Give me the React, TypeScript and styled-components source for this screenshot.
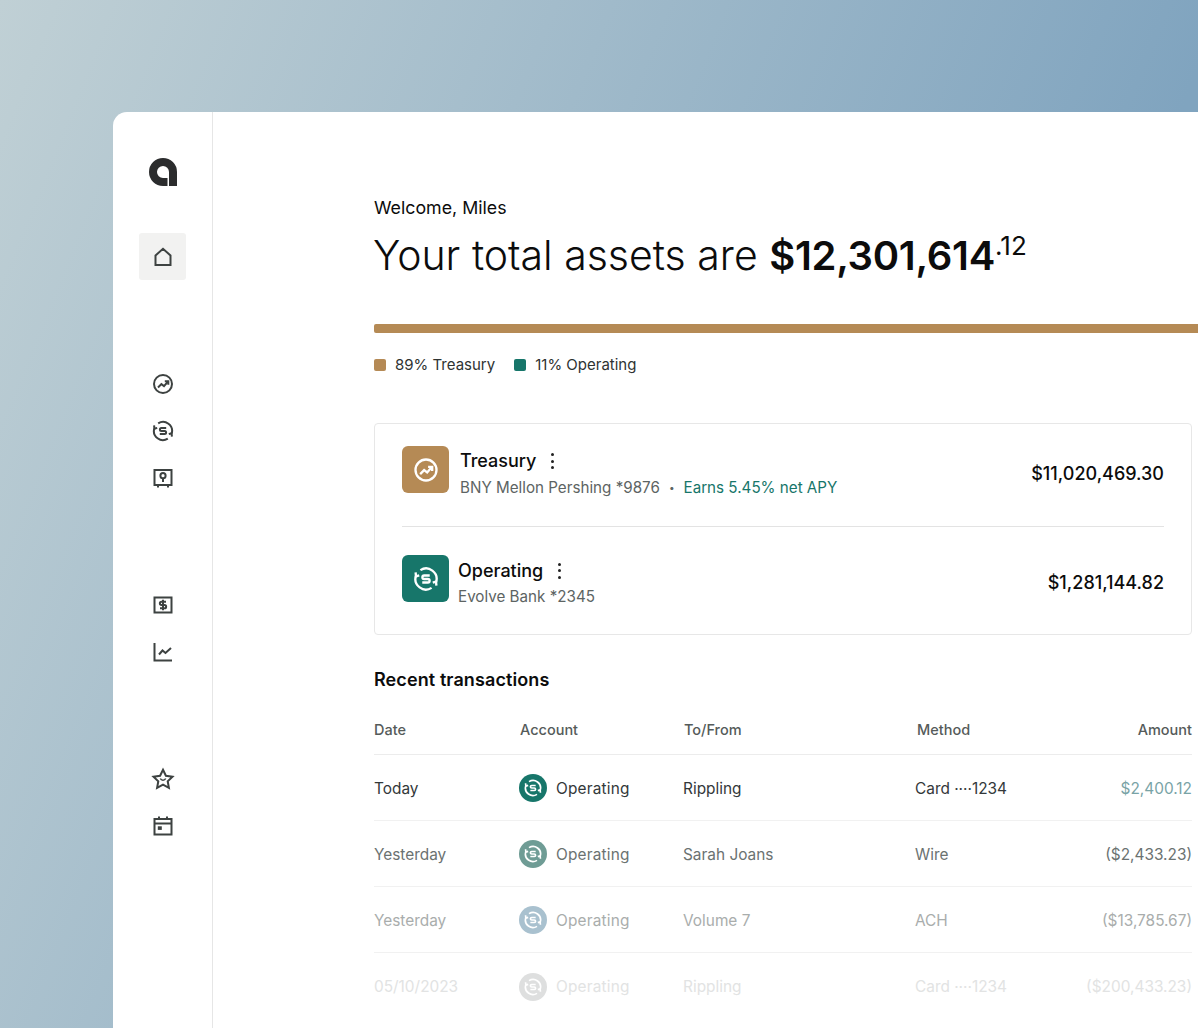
import React from 'react';
import styled, { createGlobalStyle } from 'styled-components';

const GlobalStyle = createGlobalStyle`
    html, body {
        margin: 0;
        height: 100%;
        overflow: hidden;
    }
    body {
        font-family: "Inter", "Liberation Sans", sans-serif;
        color: #0c0c0c;
    }
`;

type IconProps = { size?: number, color?: string, strokeWidth?: number };

const Svg = ({ size = 24, color = '#3d4241', strokeWidth = 2, children }: IconProps & { children: React.ReactNode }) => (
    <svg width={size} height={size} viewBox="0 0 24 24" fill="none" stroke={color} strokeWidth={strokeWidth} strokeLinecap="butt" strokeLinejoin="miter">
        {children}
    </svg>
);

const HomeIcon = (p: IconProps) => (
    <Svg {...p}><path d="M4.500 10.500 12 3.800l7.500 6.700V20H4.500Z" /></Svg>
);

const GrowthIcon = (p: IconProps) => (
    <Svg {...p}>
        <circle cx="12" cy="12" r="9" />
        <path d="M7 15.500l3.400-3.400 2.600 2 4-4.600" />
        <path d="M13.800 9.300h3.500v3.500" />
    </Svg>
);

const ExchangeIcon = (p: IconProps) => (
    <Svg {...p}>
        <path d="M7.200 4.400A9 9 0 0 1 20.700 14.500" />
        <path d="M16.800 19.600A9 9 0 0 1 3.300 9.500" />
        <path d="M3.100 6.300 3.400 9.800 6.200 8.900" />
        <path d="M20.900 17.700 20.600 14.200 17.800 15.100" />
        <path d="M15.200 9H10.400a1.500 1.500 0 0 0 0 3h3.200a1.500 1.500 0 0 1 0 3H8.800" />
    </Svg>
);

const SafeIcon = (p: IconProps) => (
    <Svg {...p}>
        <path d="M3.500 4h17v15h-17Z" />
        <circle cx="12" cy="9.700" r="2.600" />
        <path d="M12 12.500V16" />
        <path d="M7 19v2.500M17 19v2.500" />
    </Svg>
);

const BillIcon = (p: IconProps) => (
    <Svg {...p}>
        <path d="M3.500 4.500h17v15h-17Z" />
        <path d="M15 8.700H10.500a1.650 1.650 0 0 0 0 3.300h3a1.650 1.650 0 0 1 0 3.300H9" />
        <path d="M12 6.800v10.400" />
    </Svg>
);

const ChartIcon = (p: IconProps) => (
    <Svg {...p}>
        <path d="M3.500 3V20.500H21" />
        <path d="M8 14.500l3.500-4 3 2.500L20 8" />
    </Svg>
);

const StarIcon = (p: IconProps) => (
    <Svg {...p}>
        <path d="M12 2.800l2.900 6 6.600.9-4.800 4.600 1.200 6.500L12 17.700l-5.900 3.100 1.200-6.500-4.800-4.600 6.600-.9Z" />
        <path d="M9.300 11.500c.6 1.200 1.600 1.700 2.700 1.700s2.100-.5 2.700-1.700" strokeWidth="1.600" />
    </Svg>
);

const CalendarIcon = (p: IconProps) => (
    <Svg {...p}>
        <path d="M3.500 5h17v15.500h-17Z" />
        <path d="M3.500 9.500h17" />
        <path d="M8 2.500v3.500M16 2.500v3.500" />
        <rect x="6.800" y="12.300" width="4" height="3.600" fill={p.color || '#3d4241'} stroke="none" />
    </Svg>
);

const Logo = () => (
    <svg width="28" height="28" viewBox="0 0 28 28">
        <path
            fill="#2b2c2d"
            d="M14 0a14 14 0 0 1 14 14V28H20V14A6 6 0 1 0 14 20h4.500v8H14A14 14 0 0 1 14 0Z"
        />
    </svg>
);

const Page = styled.div`
    height: 1028px;
    box-sizing: border-box;
    padding: 112px 0 0 113px;
    overflow: hidden;
    background: linear-gradient(112deg, #c0d0d5 0%, #80a4bf 76%);
`;

const Panel = styled.div`
    display: flex;
    height: 916px;
    background: #ffffff;
    border-radius: 14px 0 0 0;
`;

const Sidebar = styled.nav`
    width: 100px;
    flex: none;
    box-sizing: border-box;
    border-right: 1px solid #e6e6e6;
    padding-top: 46px;
    display: flex;
    flex-direction: column;
    align-items: center;
`;

const LogoMark = styled.div`
    height: 28px;
    margin-bottom: 47px;
`;

const NavGroup = styled.div`
    display: flex;
    flex-direction: column;
    margin-bottom: 80px;
`;

const NavItem = styled.div<{ $active?: boolean }>`
    width: 47px;
    height: 47px;
    display: flex;
    align-items: center;
    justify-content: center;
    border-radius: 3px;
    background: ${props => props.$active ? '#f2f2f1' : 'transparent'};
`;

const Main = styled.main`
    flex: 1;
    min-width: 0;
    box-sizing: border-box;
    padding: 85px 6px 0 161px;
`;

const Welcome = styled.div`
    font-size: 17.800px;
    line-height: 22px;
`;

const Title = styled.h1`
    margin: 11px 0 0 -1px;
    font-size: 41px;
    line-height: 50px;
    font-weight: 300;
    letter-spacing: 0;
    white-space: nowrap;
`;

const Total = styled.strong`
    font-size: 40px;
    font-weight: 600;
    letter-spacing: -0.3px;
`;

const Cents = styled.sup`
    font-size: 26px;
    font-weight: 400;
    line-height: 0;
    vertical-align: 15px;
`;

const AllocationBar = styled.div`
    height: 9px;
    margin: 43px -6px 0 0;
    border-radius: 2px 0 0 2px;
    background: #b58a55;
`;

const Legend = styled.div`
    display: flex;
    gap: 19px;
    margin-top: 21px;
    font-size: 15px;
    line-height: 22px;
    color: #2e3332;
`;

const LegendItem = styled.div`
    display: flex;
    align-items: center;
    gap: 9px;
`;

const Swatch = styled.span<{ $color: string }>`
    width: 12px;
    height: 12px;
    border-radius: 2px;
    background: ${props => props.$color};
`;

const AccountCard = styled.section`
    margin-top: 47px;
    height: 212px;
    box-sizing: border-box;
    border: 1px solid #e7e7e7;
    border-radius: 4px;
    padding: 22px 27px 0;
`;

const AccountRow = styled.div<{ $gap: number }>`
    display: flex;
    align-items: center;
    gap: ${props => props.$gap}px;
    height: 47px;
`;

const AccountIcon = styled.div<{ $color: string }>`
    width: 47px;
    height: 47px;
    flex: none;
    border-radius: 6px;
    background: ${props => props.$color};
    display: flex;
    align-items: center;
    justify-content: center;
`;

const AccountInfo = styled.div`
    flex: 1;
    min-width: 0;
    padding-top: 8px;
`;

const AccountName = styled.div`
    display: flex;
    align-items: center;
    gap: 11px;
    font-size: 18px;
    line-height: 26px;
    font-weight: 500;
`;

const MoreDots = styled.span`
    display: inline-flex;
    flex-direction: column;
    gap: 3.500px;
    padding: 0 4px;
    i {
        width: 3px;
        height: 3px;
        border-radius: 50%;
        background: #222;
    }
`;

const AccountMeta = styled.div`
    display: flex;
    align-items: center;
    margin-top: 2px;
    font-size: 15.200px;
    line-height: 22px;
    color: #5d6463;
    white-space: nowrap;
`;

const Apy = styled.span`
    color: #17766a;
    &::before {
        content: "•";
        color: #5d6463;
        font-size: 10px;
        margin: 0 9px;
        vertical-align: 2px;
    }
`;

const AccountAmount = styled.div`
    padding-top: 7px;
    font-size: 18px;
    font-weight: 500;
`;

const CardDivider = styled.hr`
    border: 0;
    border-top: 1px solid #e3e3e3;
    margin: 33px 0 28px;
`;

const SectionTitle = styled.h2`
    margin: 33px 0 0;
    font-size: 18px;
    line-height: 24px;
    font-weight: 600;
    letter-spacing: 0.1px;
`;

const Grid = styled.div`
    display: grid;
    grid-template-columns: 145px 164px 232px 1fr auto;
`;

const HeaderRow = styled(Grid)`
    grid-template-columns: 146px 164px 233px 1fr auto;
    margin-top: 14px;
    height: 49px;
    align-items: center;
    box-sizing: border-box;
    padding-bottom: 2px;
    border-bottom: 1px solid #ececec;
    font-size: 14.500px;
    font-weight: 500;
    color: #555b5a;
`;

const TxRow = styled(Grid)<{ $color: string }>`
    height: 66px;
    box-sizing: border-box;
    align-items: center;
    padding-top: 1px;
    border-bottom: 1px solid #f1f1f1;
    font-size: 15.400px;
    color: ${props => props.$color};
    &:last-child {
        border-bottom: 0;
    }
`;

const TxAccount = styled.div`
    display: flex;
    align-items: center;
    gap: 9px;
    letter-spacing: 0.2px;
`;

const TxIcon = styled.span<{ $color: string }>`
    width: 28px;
    height: 28px;
    border-radius: 50%;
    background: ${props => props.$color};
    display: flex;
    align-items: center;
    justify-content: center;
`;

const TxAmount = styled.div<{ $color?: string }>`
    text-align: right;
    color: ${props => props.$color || 'inherit'};
`;

const navGroups = [
    [HomeIcon],
    [GrowthIcon, ExchangeIcon, SafeIcon],
    [BillIcon, ChartIcon],
    [StarIcon, CalendarIcon],
];

const transactions = [
    { date: 'Today', to: 'Rippling', method: 'Card ····1234', amount: '$2,400.12', color: '#33383a', icon: '#17766a', amountColor: '#79a3a6' },
    { date: 'Yesterday', to: 'Sarah Joans', method: 'Wire', amount: '($2,433.23)', color: '#6b7271', icon: '#6f9c95' },
    { date: 'Yesterday', to: 'Volume 7', method: 'ACH', amount: '($13,785.67)', color: '#a9adac', icon: '#a9c1cf' },
    { date: '05/10/2023', to: 'Rippling', method: 'Card ····1234', amount: '($200,433.23)', color: '#e2e3e3', icon: '#dedfdf' },
];

export default function App() {
    return (
        <Page>
            <GlobalStyle />
            <Panel>
                <Sidebar>
                    <LogoMark><Logo /></LogoMark>
                    {navGroups.map((group, i) => (
                        <NavGroup key={i}>
                            {group.map((Icon, j) => (
                                <NavItem key={j} $active={i === 0}>
                                    <Icon size={24} />
                                </NavItem>
                            ))}
                        </NavGroup>
                    ))}
                </Sidebar>
                <Main>
                    <Welcome>Welcome, Miles</Welcome>
                    <Title>Your total assets are <Total>$12,301,614</Total><Cents>.12</Cents></Title>
                    <AllocationBar />
                    <Legend>
                        <LegendItem><Swatch $color="#b58a55" />89% Treasury</LegendItem>
                        <LegendItem><Swatch $color="#17766a" />11% Operating</LegendItem>
                    </Legend>

                    <AccountCard>
                        <AccountRow $gap={11}>
                            <AccountIcon $color="#b58a55"><GrowthIcon size={28} color="#fff" /></AccountIcon>
                            <AccountInfo>
                                <AccountName>Treasury <MoreDots><i /><i /><i /></MoreDots></AccountName>
                                <AccountMeta>BNY Mellon Pershing *9876<Apy>Earns 5.45% net APY</Apy></AccountMeta>
                            </AccountInfo>
                            <AccountAmount>$11,020,469.30</AccountAmount>
                        </AccountRow>
                        <CardDivider />
                        <AccountRow $gap={9}>
                            <AccountIcon $color="#17766a"><ExchangeIcon size={28} color="#fff" /></AccountIcon>
                            <AccountInfo>
                                <AccountName>Operating <MoreDots><i /><i /><i /></MoreDots></AccountName>
                                <AccountMeta>Evolve Bank *2345</AccountMeta>
                            </AccountInfo>
                            <AccountAmount>$1,281,144.82</AccountAmount>
                        </AccountRow>
                    </AccountCard>

                    <SectionTitle>Recent transactions</SectionTitle>
                    <HeaderRow>
                        <div>Date</div>
                        <div>Account</div>
                        <div>To/From</div>
                        <div>Method</div>
                        <TxAmount>Amount</TxAmount>
                    </HeaderRow>
                    {transactions.map((tx, i) => (
                        <TxRow key={i} $color={tx.color}>
                            <div>{tx.date}</div>
                            <TxAccount>
                                <TxIcon $color={tx.icon}><ExchangeIcon size={20} color="#fff" /></TxIcon>
                                Operating
                            </TxAccount>
                            <div>{tx.to}</div>
                            <div>{tx.method}</div>
                            <TxAmount $color={tx.amountColor}>{tx.amount}</TxAmount>
                        </TxRow>
                    ))}
                </Main>
            </Panel>
        </Page>
    );
}
